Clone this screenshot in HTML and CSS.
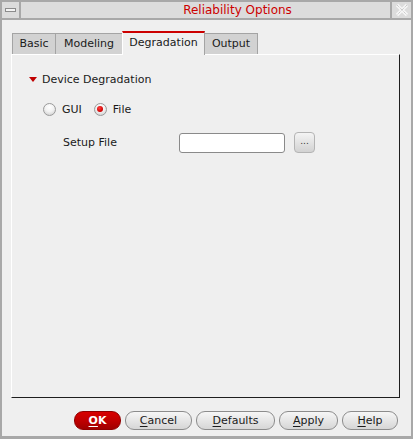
FILE: index.html
```html
<!DOCTYPE html>
<html>
<head>
<meta charset="utf-8">
<link rel="stylesheet" href="styles.css">
</head>
<body>
<div class="window">
  <div class="titlebar">
    <div class="tb-btn menu"><span class="dash"></span></div>
    <div class="title">Reliability Options</div>
    <div class="tb-btn close">
      <svg width="14" height="14" viewBox="0 0 14 14">
        <path d="M2 2 L12 12 M12 2 L2 12" stroke="#f6f6f6" stroke-width="3.2" fill="none"/>
        <path d="M2 2 L12 12 M12 2 L2 12" stroke="#b8b8b8" stroke-width="1" stroke-dasharray="1 1" fill="none"/>
      </svg>
    </div>
  </div>
  <div class="content">
    <div class="tabs">
      <div class="tab t-basic">Basic</div>
      <div class="tab t-model">Modeling</div>
      <div class="tab active t-deg">Degradation</div>
      <div class="tab t-out">Output</div>
    </div>
    <div class="panel">
      <div class="section"><span class="tri"></span><span>Device Degradation</span></div>
      <div class="radios">
        <label class="radio"><span class="circle"></span>GUI</label>
        <label class="radio on"><span class="circle"><span class="dot"></span></span>File</label>
      </div>
      <div class="setup">
        <span class="setup-label">Setup File</span>
        <span class="field"></span>
        <span class="browse">...</span>
      </div>
    </div>
    <div class="buttons">
      <div class="btn ok"><u>O</u>K</div>
      <div class="btn cancel"><u>C</u>ancel</div>
      <div class="btn defaults"><u>D</u>efaults</div>
      <div class="btn apply"><u>A</u>pply</div>
      <div class="btn help"><u>H</u>elp</div>
    </div>
  </div>
</div>
</body>
</html>
```
FILE: styles.css
```css
* { box-sizing: border-box; }
html, body { margin: 0; padding: 0; }
body {
  width: 413px;
  height: 439px;
  overflow: hidden;
  font-family: "DejaVu Sans", sans-serif;
  font-size: 11px;
  color: #1a1a1a;
  background: #a8a8a8;
}
.window {
  width: 413px;
  height: 439px;
  border-left: 2px solid #a8a8a8;
  border-right: 2px solid #a8a8a8;
  border-bottom: 3px solid #a8a8a8;
  background: #efefef;
  display: flex;
  flex-direction: column;
}
.titlebar {
  height: 20px;
  background: #a8a8a8;
  display: flex;
  gap: 2px;
  padding: 2px 0 2px 0;
}
.tb-btn {
  width: 17px;
  background: #dcdcdc;
  display: flex;
  align-items: center;
  justify-content: center;
}
.tb-btn.close { width: 19px; }
.dash {
  width: 11px;
  height: 4px;
  border: 1px solid #8c8c8c;
  background: #f4f4f4;
}
.title {
  flex: 1;
  background: #dcdcdc;
  color: #cc0000;
  font-size: 12px;
  text-align: center;
  line-height: 16px;
  padding-left: 64px;
}
.content {
  flex: 1;
  display: flex;
  flex-direction: column;
  padding: 11px 11px 0 9px;
}
.tabs {
  display: flex;
  align-items: flex-end;
  height: 23px;
  padding-left: 1px;
}
.tab {
  height: 21px;
  padding: 0;
  text-align: center;
  line-height: 20px;
  background: #d2d2d2;
  border: 1px solid #a4a4a4;
  border-bottom: none;
  margin-right: -1px;
}
.t-basic { width: 44px; }
.t-model { width: 68px; }
.t-deg { width: 83px; }
.t-out { width: 54px; }
.tab.active {
  background: #efefef;
  border: none;
  border-top: 2px solid #cc0000;
  line-height: 19px;
  border-left: 1px solid #ffffff;
  border-right: 1px solid #a4a4a4;
  position: relative;
  z-index: 1;
  margin-bottom: -1px;
  height: 24px;
}
.panel {
  height: 344px;
  border-top: 1px solid #ffffff;
  border-left: 1px solid #ffffff;
  border-right: 1px solid #1e1e1e;
  border-bottom: 1px solid #1e1e1e;
  padding-top: 16px;
}
.section {
  display: flex;
  align-items: center;
  height: 16px;
  padding-left: 17px;
}
.tri {
  width: 0;
  height: 0;
  border-left: 4px solid transparent;
  border-right: 4px solid transparent;
  border-top: 5px solid #c00000;
  margin-right: 5px;
}
.radios {
  display: flex;
  align-items: center;
  height: 14px;
  margin-top: 15px;
  padding-left: 31px;
}
.radio {
  display: flex;
  align-items: center;
  gap: 6px;
  margin-right: 12px;
}
.circle {
  width: 13px;
  height: 13px;
  border-radius: 50%;
  border: 1px solid #9a9a9a;
  background: radial-gradient(circle at 50% 30%, #ffffff 0%, #f2f2f2 45%, #c8c8c8 100%);
  display: flex;
  align-items: center;
  justify-content: center;
}
.dot {
  width: 6px;
  height: 6px;
  border-radius: 50%;
  background: radial-gradient(circle at 40% 35%, #ff4040, #cc0000 70%);
}
.setup {
  display: flex;
  align-items: center;
  height: 21px;
  margin-top: 16px;
  padding-left: 51px;
}
.setup-label {
  width: 116px;
}
.field {
  width: 106px;
  height: 20px;
  background: #ffffff;
  border: 1px solid #8a8a8a;
  border-radius: 3px;
}
.browse {
  width: 21px;
  height: 21px;
  margin-left: 9px;
  border: 1px solid #b4b4b4;
  border-radius: 4px;
  background: linear-gradient(#f4f4f4, #d2d2d2);
  font-size: 9px;
  text-align: center;
  line-height: 16px;
  color: #333;
}
.buttons {
  display: flex;
  justify-content: flex-end;
  gap: 4px;
  margin-top: 13px;
  padding-right: 2px;
}
.btn {
  height: 19px;
  border-radius: 9px;
  border: 1px solid #8c8c8c;
  background: linear-gradient(#f6f6f6, #e6e6e6 50%, #d6d6d6);
  text-align: center;
  line-height: 17px;
}
.btn u { text-decoration-thickness: 1px; text-underline-offset: 2px; }
.ok {
  width: 47px;
  background: linear-gradient(#d80000, #c00000 50%, #a00000);
  border-color: #900000;
  color: #ffffff;
  font-weight: bold;
}
.cancel { width: 67px; }
.defaults { width: 79px; }
.apply { width: 59px; }
.help { width: 56px; }
```
